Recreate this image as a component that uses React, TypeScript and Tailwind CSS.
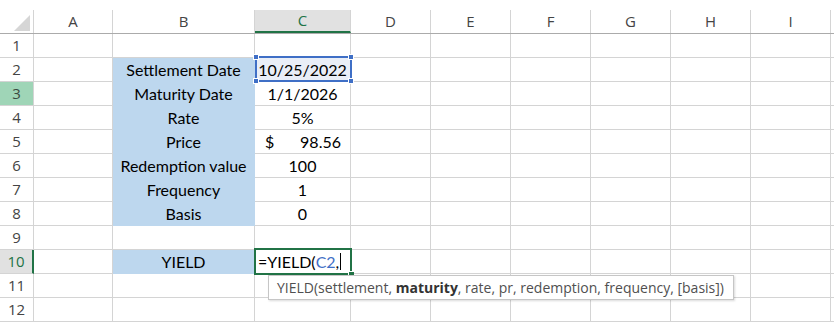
import React from "react";

const COLS = [
  { key: "A", w: "w-[79px]" },
  { key: "B", w: "w-[142px]" },
  { key: "C", w: "w-[96px]" },
  { key: "D", w: "w-[80px]" },
  { key: "E", w: "w-[80px]" },
  { key: "F", w: "w-[80px]" },
  { key: "G", w: "w-[80px]" },
  { key: "H", w: "w-[80px]" },
  { key: "I", w: "w-[80px]" },
];

const LABELS: Record<number, string> = {
  2: "Settlement Date",
  3: "Maturity Date",
  4: "Rate",
  5: "Price",
  6: "Redemption value",
  7: "Frequency",
  8: "Basis",
  10: "YIELD",
};

const VALUES: Record<number, string> = {
  2: "10/25/2022",
  3: "1/1/2026",
  4: "5%",
  6: "100",
  7: "1",
  8: "0",
};

const cellFont = { fontFamily: "Lato, 'Liberation Sans', sans-serif" };
const uiFont = { fontFamily: "'Open Sans', 'Noto Sans', sans-serif" };

function ValueCell({ row }: { row: number }) {
  if (row === 5) {
    return (
      <div className="flex w-full items-center justify-between pl-[10px] pr-[9px]">
        <span>$</span>
        <span>98.56</span>
      </div>
    );
  }
  if (row === 10) {
    return (
      <div className="flex w-full items-center pl-[3px]">
        <span>=YIELD(</span>
        <span className="text-[#3f6fc6]">C2</span>
        <span>,</span>
        <span className="ml-[1px] h-[17px] w-[1px] bg-black" />
      </div>
    );
  }
  return <span className="w-full text-center">{VALUES[row] ?? ""}</span>;
}

function Row({ row }: { row: number }) {
  const headerCls =
    row === 3
      ? "bg-[#9fd5b7] text-[#3b4a42]"
      : row === 10
        ? "bg-[#e1e1e1] text-[#217346] border-r-2 border-r-[#217346]"
        : "bg-white text-[#444]";
  return (
    <div className="flex h-[24px]">
      <div
        className={`flex w-[34px] shrink-0 items-center justify-center border-b border-r border-[#d4d4d4] text-[15px] ${headerCls}`}
        style={uiFont}
      >
        {row}
      </div>
      {COLS.map((c) => {
        const isB = c.key === "B" && LABELS[row];
        const isC = c.key === "C";
        return (
          <div
            key={c.key}
            className={`flex shrink-0 items-center border-b border-r text-[16px] text-black ${c.w} ${
              isB ? "border-[#bdd7ee] bg-[#bdd7ee]" : "border-[#d4d4d4]"
            } ${isC && row === 2 ? "bg-[#e9eef7]" : ""}`}
            style={cellFont}
          >
            {isB ? <span className="w-full text-center">{LABELS[row]}</span> : null}
            {isC ? <ValueCell row={row} /> : null}
          </div>
        );
      })}
      <div className="flex-1 border-b border-[#d4d4d4]" />
    </div>
  );
}

function Handle({ cls }: { cls: string }) {
  return <div className={`absolute h-[6px] w-[6px] border border-white bg-[#3f6fc6] ${cls}`} />;
}

export default function App() {
  return (
    <div className="relative h-[322px] w-[834px] overflow-hidden bg-white">
      <div className="h-[10px]" />
      {/* column headers */}
      <div className="flex h-[24px] border-b border-[#ababab]" style={uiFont}>
        <div className="relative w-[34px] shrink-0 border-r border-[#d4d4d4]">
          <svg className="absolute left-[14px] top-[5px]" width="16" height="16" viewBox="0 0 16 16">
            <polygon points="16,0 16,16 0,16" fill="#d6d6d6" />
          </svg>
        </div>
        {COLS.map((c) => (
          <div
            key={c.key}
            className={`flex shrink-0 items-center justify-center border-r border-[#d4d4d4] text-[15px] ${c.w} ${
              c.key === "C"
                ? "border-b-2 border-b-[#217346] bg-[#e1e1e1] text-[#217346]"
                : "text-[#444]"
            }`}
          >
            {c.key}
          </div>
        ))}
        <div className="flex-1" />
      </div>

      {Array.from({ length: 12 }, (_, i) => (
        <Row key={i} row={i + 1} />
      ))}

      {/* C2 reference highlight */}
      <div className="absolute left-[255px] top-[56px] h-[26px] w-[97px] border-2 border-[#3f6fc6]">
        <Handle cls="-left-[4px] -top-[4px]" />
        <Handle cls="-right-[4px] -top-[4px]" />
        <Handle cls="-left-[4px] -bottom-[4px]" />
        <Handle cls="-right-[4px] -bottom-[4px]" />
      </div>

      {/* active cell C10 */}
      <div className="absolute left-[254px] top-[248px] h-[27px] w-[98px] border-2 border-[#217346]">
        <div className="absolute -bottom-[4px] -right-[4px] h-[6px] w-[6px] border-l border-t border-white bg-[#217346]" />
      </div>

      {/* function tooltip */}
      <div
        className="absolute left-[268px] top-[275px] flex h-[25px] items-center border border-[#c6c6c6] bg-white pl-[8px] pr-[9px] text-[14px] text-[#505050] shadow-[1px_1px_2px_rgba(0,0,0,0.15)]"
        style={uiFont}
      >
        YIELD(settlement,&nbsp;<b className="font-bold text-[#333]">maturity</b>, rate, pr, redemption, frequency, [basis])
      </div>
    </div>
  );
}
